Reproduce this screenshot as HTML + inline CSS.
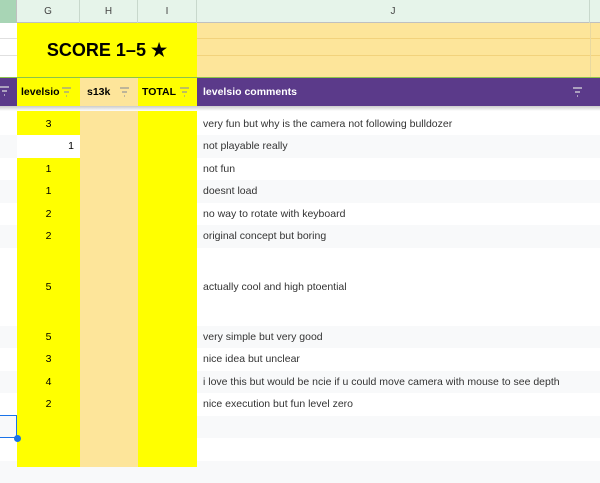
<!DOCTYPE html>
<html><head><style>
body{margin:0;width:600px;height:467px;overflow:hidden;background:#fff;font-family:"Liberation Sans",Arial,sans-serif;position:relative}
.a{position:absolute;box-sizing:border-box}
.t{font-size:10.5px;color:#222}
</style></head><body>
<div class="a" style="left:0;top:0;width:600px;height:23px;background:#e6f4ea;border-bottom:1px solid #c0c0c0"></div>
<div class="a" style="left:0;top:0;width:17px;height:23px;background:#a8d5b5;border-right:1px solid #c0c0c0"></div>
<div class="a t" style="left:17px;top:0;width:63px;height:23px;line-height:23px;text-align:center;border-right:1px solid #c8d8cc;color:#444;font-size:10px">G</div>
<div class="a t" style="left:80px;top:0;width:58px;height:23px;line-height:23px;text-align:center;border-right:1px solid #c8d8cc;color:#444;font-size:10px">H</div>
<div class="a t" style="left:138px;top:0;width:59px;height:23px;line-height:23px;text-align:center;border-right:1px solid #c8d8cc;color:#444;font-size:10px">I</div>
<div class="a t" style="left:197px;top:0;width:393px;height:23px;line-height:23px;text-align:center;border-right:1px solid #c8d8cc;color:#444;font-size:10px">J</div>
<div class="a" style="left:0;top:23px;width:17px;height:54px;background:#fff"></div>
<div class="a" style="left:0;top:38px;width:17px;height:1px;background:#e0e0e0"></div>
<div class="a" style="left:0;top:55px;width:17px;height:1px;background:#e0e0e0"></div>
<div class="a" style="left:17px;top:23px;width:180px;height:54px;background:#ffff00;font-weight:bold;font-size:18px;text-align:center;line-height:54px;color:#000">SCORE 1–5 ★</div>
<div class="a" style="left:197px;top:23px;width:403px;height:54px;background:#fde59a"></div>
<div class="a" style="left:197px;top:38px;width:403px;height:1px;background:#f2d27c"></div>
<div class="a" style="left:197px;top:55px;width:403px;height:1px;background:#f2d27c"></div>
<div class="a" style="left:590px;top:23px;width:1px;height:54px;background:#e8d8a0"></div>
<div class="a" style="left:0;top:77px;width:600px;height:29px;background:#5b3a8a;border-top:1px solid #8bc34a"></div>
<div class="a" style="left:17px;top:78px;width:63px;height:28px;background:#ffff00;font-weight:bold;font-size:10.5px;line-height:28px;padding-left:4px">levelsio</div>
<div class="a" style="left:80px;top:78px;width:58px;height:28px;background:#fde59a;font-weight:bold;font-size:10.5px;line-height:28px;padding-left:7px">s13k</div>
<div class="a" style="left:138px;top:78px;width:59px;height:28px;background:#ffff00;font-weight:bold;font-size:10.5px;line-height:28px;padding-left:4px">TOTAL</div>
<div class="a" style="left:203px;top:78px;height:28px;color:#fff;font-weight:bold;font-size:10.5px;line-height:28px">levelsio comments</div>
<svg class="a" style="left:0;top:78px" width="600" height="28">
<g stroke-width="1.2" fill="none">
<g stroke="#ddd"><path d="M0 9h9M2 13h5M4 17h1"/></g>
<g stroke="#999"><path d="M62 10h9M64 14h5M66 18h1"/><path d="M120 10h9M122 14h5M124 18h1"/><path d="M180 10h9M182 14h5M184 18h1"/></g>
<g stroke="#ddd"><path d="M573 10h9M575 14h5M577 18h1"/></g>
</g></svg>
<div class="a" style="left:0;top:106px;width:600px;height:5px;background:linear-gradient(#ccc,#fff)"></div>
<div id="rows"></div>
<div class="a" style="left:17px;top:111px;width:63px;height:356px;background:#ffff00"></div>
<div class="a" style="left:80px;top:111px;width:58px;height:356px;background:#fde59a"></div>
<div class="a" style="left:138px;top:111px;width:59px;height:356px;background:#ffff00"></div>
<div class="a" style="left:17px;top:135px;width:63px;height:23px;background:#fff"></div>
<script>
var r=[[113,135,"3","very fun but why is the camera not following bulldozer"],[135,158,"","not playable really"],[158,180,"1","not fun"],[180,203,"1","doesnt load"],[203,225,"2","no way to rotate with keyboard"],[225,248,"2","original concept but boring"],[248,326,"5","actually cool and high ptoential"],[326,348,"5","very simple but very good"],[348,371,"3","nice idea but unclear"],[371,393,"4","i love this but would be ncie if u could move camera with mouse to see depth"],[393,416,"2","nice execution but fun level zero"],[416,438,"",""],[438,461,"",""],[461,483,"",""]];
var h="";r.forEach(function(x,i){var bg=i%2?"#f8f9fa":"#fff";
h+='<div class="a" style="left:0;top:'+x[0]+'px;width:600px;height:'+(x[1]-x[0])+'px;background:'+bg+'"></div>';
h+='<div class="a t" style="left:203px;top:'+x[0]+'px;line-height:'+(x[1]-x[0])+'px;z-index:2;color:#333">'+x[3]+'</div>';
h+='<div class="a t" style="left:17px;width:63px;text-align:center;top:'+x[0]+'px;line-height:'+(x[1]-x[0])+'px;z-index:2;color:#000">'+x[2]+'</div>';});
document.getElementById("rows").outerHTML=h;
</script>
<div class="a t" style="left:17px;top:135px;width:57px;text-align:right;line-height:23px;z-index:2;color:#000">1</div>
<div class="a" style="left:-2px;top:415px;width:19px;height:23px;border:1.5px solid #1a73e8;z-index:3"></div>
<div class="a" style="left:14px;top:435px;width:7px;height:7px;border-radius:50%;background:#1a73e8;z-index:4"></div>
</body></html>
